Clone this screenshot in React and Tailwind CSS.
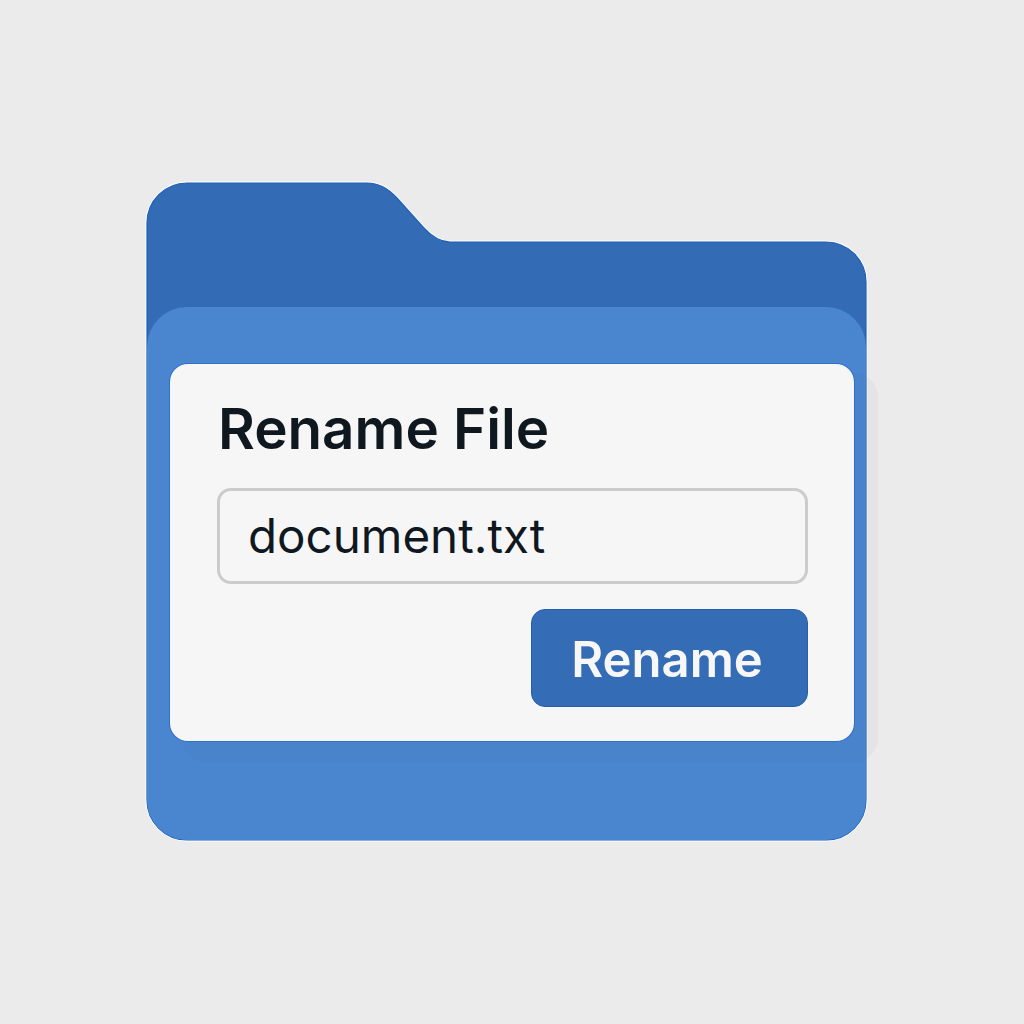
import React from "react";

const folderPath =
  "M0 617V40A40 40 0 0 1 40 0H220C232 0 242 6 250 15L276 44C284 53 292 59 303 59H679A40 40 0 0 1 719 99V617A40 40 0 0 1 679 657H40A40 40 0 0 1 0 617Z";

const FolderBack = () => (
  <svg
    width="719"
    height="657"
    viewBox="0 0 719 657"
    fill="none"
    className="block overflow-visible"
  >
    <path d={folderPath} stroke="#ffffff" strokeWidth="3" />
    <path d={folderPath} fill="#336bb5" stroke="#1f61b8" strokeWidth="1.2" />
  </svg>
);

export default function App() {
  return (
    <div className="min-h-screen bg-[#ebebeb] pl-[147px] pt-[183px] font-['Inter',sans-serif]">
      <div className="w-[719px]">
        <FolderBack />

        {/* Front of the folder */}
        <div className="relative -mt-[533px] h-[533px] rounded-[40px] bg-[#4a86d0] pl-[23px] pt-[57px]">
          <div className="w-[684px] h-[377px] rounded-[18px] bg-[#f6f6f6] pl-[47px] pr-[46px] pt-[33px] shadow-[0_0_0_1px_#2f72c4,18px_15px_0_6px_rgba(60,70,100,0.035)]">
            <h1 className="text-[56.5px] leading-[64px] font-semibold text-[#10181f] pl-[1px]">
              Rename File
            </h1>
            <div className="mt-[27px] h-[96px] rounded-[14px] border-[3px] border-[#cccccc] pl-[28px] flex items-center text-[47.5px] text-[#10181f]">
              document.txt
            </div>
            <div className="mt-[25px] flex justify-end">
              <button className="w-[277px] h-[98px] rounded-[14px] bg-[#356cb6] border border-[#2560b0] pr-[5px] pt-[3px] text-[49px] font-semibold text-[#f7f7f7]">
                Rename
              </button>
            </div>
          </div>
        </div>
      </div>
    </div>
  );
}
